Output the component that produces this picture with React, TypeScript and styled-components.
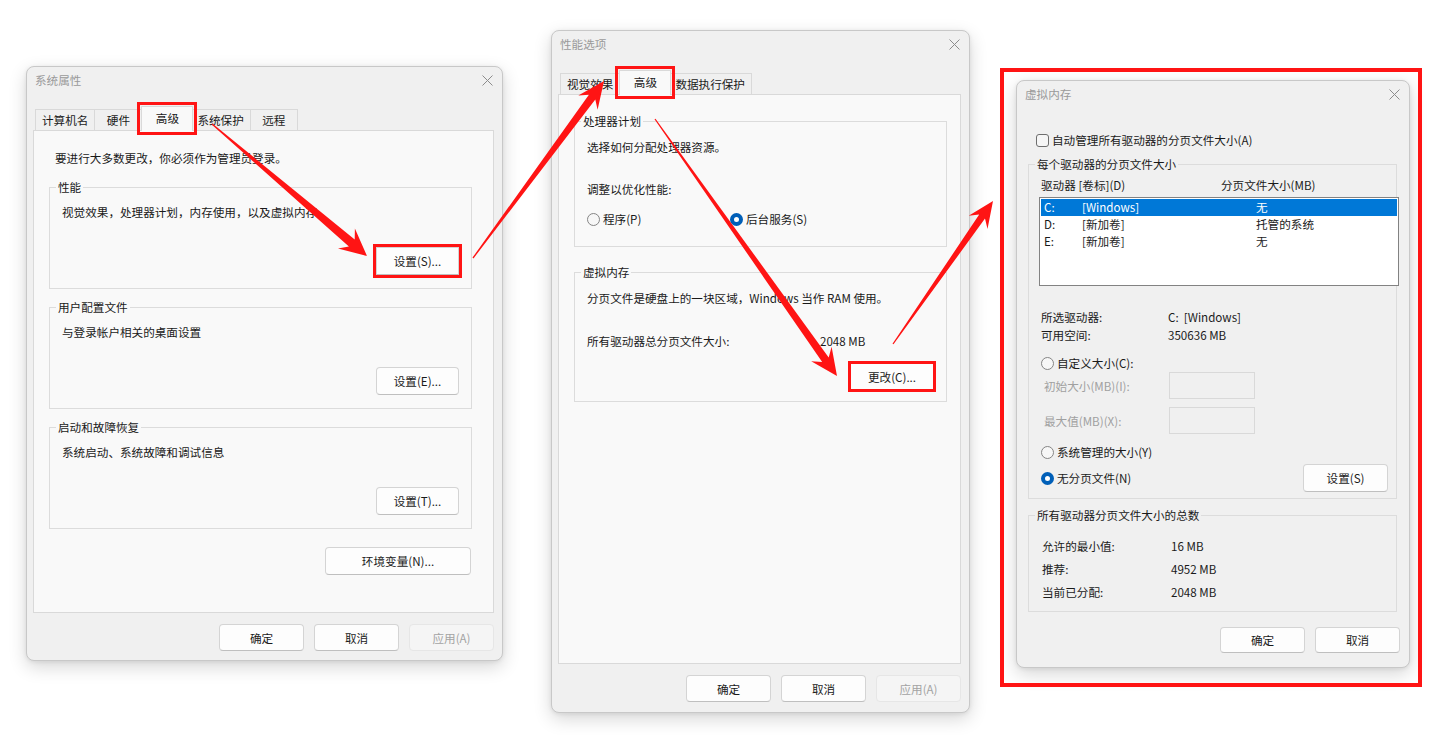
import React from 'react';
import styled, { createGlobalStyle, css } from 'styled-components';

const GlobalStyle = createGlobalStyle`
  html, body {
    margin: 0;
    padding: 0;
    background: #ffffff;
  }
  body {
    font-family: "Noto Sans CJK SC", "Noto Sans", "Liberation Sans", sans-serif;
    font-size: 11.6px;
    line-height: 16px;
    color: #1a1a1a;
  }
  * { box-sizing: border-box; }
`;

const Desktop = styled.div`
    position: relative;
    width: 1441px;
    height: 735px;
    overflow: hidden;
    background: #ffffff;
`;

// windows sit on a free canvas, their place is the content
const Window = styled.section<{ $x: number; $y: number; $w: number; $h: number }>`
    position: absolute;
    left: ${p => p.$x}px;
    top: ${p => p.$y}px;
    width: ${p => p.$w}px;
    height: ${p => p.$h}px;
    display: flex;
    flex-direction: column;
    background: #f0f0f0;
    border: 1px solid #c8c8c8;
    border-radius: 8px;
    box-shadow: 0 6px 18px rgba(0,0,0,0.16), 0 1px 4px rgba(0,0,0,0.08);
    overflow: hidden;
`;

const TitleBar = styled.header`
    flex: none;
    height: 28px;
    display: flex;
    align-items: center;
    justify-content: space-between;
    padding: 0 9px 2px 8px;
    color: #9a9a9a;
`;

const Body = styled.div<{ $pad: string }>`
    flex: 1;
    min-height: 0;
    display: flex;
    flex-direction: column;
    padding: ${p => p.$pad};
`;

const TabStrip = styled.div`
    flex: none;
    height: 24px;
    display: flex;
    align-items: flex-end;
    padding-left: 3px;
    position: relative;
    z-index: 1;
`;

const Tab = styled.div<{ $active?: boolean; $mark?: boolean }>`
    height: 21px;
    min-width: 48px;
    padding: 0 6px;
    margin-left: -1px;
    display: flex;
    align-items: center;
    justify-content: center;
    background: #f0f0f0;
    border: 1px solid #d9d9d9;
    border-bottom: none;
    white-space: nowrap;
    ${p => p.$active && css`
        height: 25px;
        min-width: 52px;
        margin: 0 -2px -1px -1px;
        padding: 0 8px 2px;
        background: #f9f9f9;
        position: relative;
        z-index: 2;
    `}
    ${p => p.$mark && css`
        outline: 3px solid #ff1414;
        outline-offset: 1px;
    `}
`;

const Panel = styled.div<{ $pad: string }>`
    flex: 1;
    display: flex;
    flex-direction: column;
    background: #f9f9f9;
    border: 1px solid #d9d9d9;
    padding: ${p => p.$pad};
`;

const Note = styled.div`
    padding-left: 6px;
`;

const Group = styled.fieldset<{ $mt?: number }>`
    margin: ${p => p.$mt ?? 0}px 0 0;
    padding: 0;
    min-width: 0;
    border: 1px solid #dcdcdc;
`;

const Legend = styled.legend`
    margin-left: 6px;
    padding: 0 2px;
    line-height: 16px;
`;

const GroupBody = styled.div<{ $pad: string }>`
    display: flex;
    flex-direction: column;
    padding: ${p => p.$pad};
`;

const Line = styled.div<{ $mt?: number }>`
    margin-top: ${p => p.$mt ?? 0}px;
    white-space: nowrap;
`;

const Actions = styled.div<{ $mt?: number; $mr?: number }>`
    display: flex;
    justify-content: flex-end;
    gap: 10px;
    margin-top: ${p => p.$mt ?? 0}px;
    margin-right: ${p => p.$mr ?? 0}px;
`;

const Footer = styled(Actions)`
    flex: none;
`;

const Button = styled.button<{ $w: number; $h?: number; $mark?: boolean; $markOff?: number }>`
    width: ${p => p.$w}px;
    height: ${p => p.$h ?? 27}px;
    padding: 0;
    display: inline-flex;
    align-items: center;
    justify-content: center;
    font: inherit;
    color: #1a1a1a;
    background: #fdfdfd;
    border: 1px solid #d4d4d4;
    border-bottom-color: #bfbfbf;
    border-radius: 4px;
    &:disabled {
        color: #a3a3a3;
        background: #f5f5f5;
        border-color: #e6e6e6;
    }
    ${p => p.$mark && css`
        border-radius: 0;
        outline: 3px solid #ff1414;
        outline-offset: ${p.$markOff ?? 0}px;
    `}
`;

const Pair = styled.div<{ $col: number; $mt?: number; $gap?: number }>`
    display: grid;
    grid-template-columns: ${p => p.$col}px 1fr;
    row-gap: ${p => p.$gap ?? 0}px;
    margin-top: ${p => p.$mt ?? 0}px;
    white-space: nowrap;
`;

const OptionRow = styled.div<{ $mt?: number; $ml?: number }>`
    display: flex;
    align-items: center;
    margin-top: ${p => p.$mt ?? 0}px;
    margin-left: ${p => p.$ml ?? 0}px;
`;

const Option = styled.label<{ $w?: number }>`
    display: flex;
    align-items: center;
    gap: 3px;
    width: ${p => p.$w ? `${p.$w}px` : 'auto'};
    white-space: nowrap;
`;

const RadioDot = styled.span<{ $on?: boolean }>`
    flex: none;
    width: 13px;
    height: 13px;
    border-radius: 50%;
    ${p => p.$on ? css`
        border: 4px solid #005fb8;
        background: #ffffff;
    ` : css`
        border: 1px solid #858585;
        background: #f7f7f7;
    `}
`;

const CheckBox = styled.span`
    flex: none;
    width: 13px;
    height: 13px;
    border: 1px solid #6e6e6e;
    border-radius: 3px;
    background: #f6f6f6;
`;

const DriveHead = styled.div`
    display: grid;
    grid-template-columns: 180px 1fr;
    margin-top: 5px;
    white-space: nowrap;
`;

const DriveList = styled.div`
    height: 89px;
    margin: 4px -15px 0 -2px;
    padding: 1px;
    background: #ffffff;
    border: 1px solid #828282;
`;

const DriveRow = styled.div<{ $sel?: boolean }>`
    display: grid;
    grid-template-columns: 38px 174px 1fr;
    height: 17px;
    line-height: 17px;
    padding-left: 3px;
    white-space: nowrap;
    background: ${p => p.$sel ? '#0078d7' : 'transparent'};
    color: ${p => p.$sel ? '#ffffff' : 'inherit'};
`;

const SizeField = styled.div`
    width: 86px;
    height: 27px;
    background: #f0f0f0;
    border: 1px solid #d9d9d9;
`;

const FieldLabel = styled.span`
    width: 128px;
    padding-left: 3px;
    color: #a0a0a0;
`;

const Spacer = styled.div`
    flex: 1;
`;

const Frame = styled.div`
    position: absolute;
    left: 1000px;
    top: 68px;
    width: 422px;
    height: 619px;
    border: 4px solid #ff1414;
    pointer-events: none;
    z-index: 9;
`;

const ArrowLayer = styled.svg`
    position: absolute;
    left: 0;
    top: 0;
    width: 1441px;
    height: 735px;
    pointer-events: none;
    z-index: 10;
`;

const CloseIcon = () => (
    <svg width="11" height="11" viewBox="0 0 11 11">
        <path d="M0.5 0.5 L10.5 10.5 M10.5 0.5 L0.5 10.5" stroke="#8c8c8c" strokeWidth="1" fill="none" />
    </svg>
);

type Pt = [number, number];

const arrowPoints = (t: Pt, p: Pt, shaft: number, head: number, len: number) => {
    const dx = p[0] - t[0];
    const dy = p[1] - t[1];
    const L = Math.hypot(dx, dy);
    const ux = dx / L, uy = dy / L;
    const nx = -uy, ny = ux;
    const bx = p[0] - ux * len, by = p[1] - uy * len;
    const f = (x: number, y: number) => `${x.toFixed(1)},${y.toFixed(1)}`;
    return [
        f(t[0] + nx * 0.6, t[1] + ny * 0.6),
        f(bx + ux * 5 + nx * shaft / 2, by + uy * 5 + ny * shaft / 2),
        f(bx - ux * 2 + nx * head / 2, by - uy * 2 + ny * head / 2),
        f(p[0], p[1]),
        f(bx - ux * 2 - nx * head / 2, by - uy * 2 - ny * head / 2),
        f(bx + ux * 5 - nx * shaft / 2, by + uy * 5 - ny * shaft / 2),
        f(t[0] - nx * 0.6, t[1] - ny * 0.6),
    ].join(' ');
};

const arrows: { t: Pt; p: Pt; shaft: number; head: number; len: number }[] = [
    { t: [212, 124], p: [367, 256], shaft: 9, head: 26, len: 25 },
    { t: [473, 258], p: [604, 81], shaft: 8, head: 24, len: 25 },
    { t: [655, 119], p: [837, 376], shaft: 8, head: 25, len: 25 },
    { t: [893, 344], p: [993, 201], shaft: 7, head: 23, len: 24 },
];

const App = () => {
    return (
        <>
            <GlobalStyle />
            <Desktop>
                <Window $x={26} $y={66} $w={477} $h={595}>
                    <TitleBar><span>系统属性</span><CloseIcon /></TitleBar>
                    <Body $pad="11px 8px 9px 6px">
                        <TabStrip>
                            <Tab>计算机名</Tab>
                            <Tab>硬件</Tab>
                            <Tab $active $mark>高级</Tab>
                            <Tab>系统保护</Tab>
                            <Tab>远程</Tab>
                        </TabStrip>
                        <Panel $pad="19px 21px 0 15px">
                            <Note>要进行大多数更改，你必须作为管理员登录。</Note>
                            <Group $mt={13}>
                                <Legend>性能</Legend>
                                <GroupBody $pad="9px 12px 13px">
                                    <Line>视觉效果，处理器计划，内存使用，以及虚拟内存</Line>
                                    <Actions $mt={27}><Button $w={83} $h={28} $mark>设置(S)...</Button></Actions>
                                </GroupBody>
                            </Group>
                            <Group $mt={10}>
                                <Legend>用户配置文件</Legend>
                                <GroupBody $pad="9px 12px 13px">
                                    <Line>与登录帐户相关的桌面设置</Line>
                                    <Actions $mt={27}><Button $w={83} $h={28}>设置(E)...</Button></Actions>
                                </GroupBody>
                            </Group>
                            <Group $mt={10}>
                                <Legend>启动和故障恢复</Legend>
                                <GroupBody $pad="9px 12px 13px">
                                    <Line>系统启动、系统故障和调试信息</Line>
                                    <Actions $mt={27}><Button $w={83} $h={28}>设置(T)...</Button></Actions>
                                </GroupBody>
                            </Group>
                            <Actions $mt={18} $mr={1}><Button $w={146} $h={28}>环境变量(N)...</Button></Actions>
                        </Panel>
                        <Footer $mt={11}>
                            <Button $w={85}>确定</Button>
                            <Button $w={85}>取消</Button>
                            <Button $w={85} disabled>应用(A)</Button>
                        </Footer>
                    </Body>
                </Window>

                <Window $x={551} $y={30} $w={419} $h={683}>
                    <TitleBar><span>性能选项</span><CloseIcon /></TitleBar>
                    <Body $pad="11px 8px 10px 6px">
                        <TabStrip>
                            <Tab>视觉效果</Tab>
                            <Tab $active $mark>高级</Tab>
                            <Tab>数据执行保护</Tab>
                        </TabStrip>
                        <Panel $pad="18px 13px 0 15px">
                            <Group>
                                <Legend>处理器计划</Legend>
                                <GroupBody $pad="10px 12px 19px">
                                    <Line>选择如何分配处理器资源。</Line>
                                    <Line $mt={26}>调整以优化性能:</Line>
                                    <OptionRow $mt={14}>
                                        <Option $w={143}><RadioDot />程序(P)</Option>
                                        <Option><RadioDot $on />后台服务(S)</Option>
                                    </OptionRow>
                                </GroupBody>
                            </Group>
                            <Group $mt={17}>
                                <Legend>虚拟内存</Legend>
                                <GroupBody $pad="10px 12px 11px">
                                    <Line>分页文件是硬盘上的一块区域，Windows 当作 RAM 使用。</Line>
                                    <Pair $col={233} $mt={27}>
                                        <span>所有驱动器总分页文件大小:</span>
                                        <span>2048 MB</span>
                                    </Pair>
                                    <Actions $mt={14}><Button $w={84} $h={27} $mark $markOff={-1}>更改(C)...</Button></Actions>
                                </GroupBody>
                            </Group>
                        </Panel>
                        <Footer $mt={11}>
                            <Button $w={85}>确定</Button>
                            <Button $w={85}>取消</Button>
                            <Button $w={85} disabled>应用(A)</Button>
                        </Footer>
                    </Body>
                </Window>

                <Window $x={1016} $y={80} $w={394} $h={588}>
                    <TitleBar><span>虚拟内存</span><CloseIcon /></TitleBar>
                    <Body $pad="23px 12px 14px 11px">
                        <OptionRow $ml={8}>
                            <Option><CheckBox />自动管理所有驱动器的分页文件大小(A)</Option>
                        </OptionRow>
                        <Group $mt={8}>
                            <Legend>每个驱动器的分页文件大小</Legend>
                            <GroupBody $pad="0 12px 6px">
                                <DriveHead>
                                    <span>驱动器 [卷标](D)</span>
                                    <span>分页文件大小(MB)</span>
                                </DriveHead>
                                <DriveList>
                                    <DriveRow $sel><span>C:</span><span>[Windows]</span><span>无</span></DriveRow>
                                    <DriveRow><span>D:</span><span>[新加卷]</span><span>托管的系统</span></DriveRow>
                                    <DriveRow><span>E:</span><span>[新加卷]</span><span>无</span></DriveRow>
                                </DriveList>
                                <Pair $col={127} $mt={23} $gap={2}>
                                    <span>所选驱动器:</span><span>C:&nbsp;&nbsp;[Windows]</span>
                                    <span>可用空间:</span><span>350636 MB</span>
                                </Pair>
                                <OptionRow $mt={12}>
                                    <Option><RadioDot />自定义大小(C):</Option>
                                </OptionRow>
                                <OptionRow $mt={1}>
                                    <FieldLabel>初始大小(MB)(I):</FieldLabel>
                                    <SizeField />
                                </OptionRow>
                                <OptionRow $mt={8}>
                                    <FieldLabel>最大值(MB)(X):</FieldLabel>
                                    <SizeField />
                                </OptionRow>
                                <OptionRow $mt={10}>
                                    <Option><RadioDot />系统管理的大小(Y)</Option>
                                </OptionRow>
                                <OptionRow $mt={4}>
                                    <Option><RadioDot $on />无分页文件(N)</Option>
                                    <Spacer />
                                    <Actions $mr={-4}><Button $w={85} $h={28}>设置(S)</Button></Actions>
                                </OptionRow>
                            </GroupBody>
                        </Group>
                        <Group $mt={8}>
                            <Legend>所有驱动器分页文件大小的总数</Legend>
                            <GroupBody $pad="15px 12px 11px 13px">
                                <Pair $col={129} $gap={7}>
                                    <span>允许的最小值:</span><span>16 MB</span>
                                    <span>推荐:</span><span>4952 MB</span>
                                    <span>当前已分配:</span><span>2048 MB</span>
                                </Pair>
                            </GroupBody>
                        </Group>
                        <Spacer />
                        <Footer $mr={-3} $mt={0}>
                            <Button $w={85} $h={26}>确定</Button>
                            <Button $w={85} $h={26}>取消</Button>
                        </Footer>
                    </Body>
                </Window>

                <Frame />
                <ArrowLayer viewBox="0 0 1441 735">
                    {arrows.map((a, i) => (
                        <polygon key={i} points={arrowPoints(a.t, a.p, a.shaft, a.head, a.len)} fill="#ff1414" />
                    ))}
                </ArrowLayer>
            </Desktop>
        </>
    );
};

export default App;
